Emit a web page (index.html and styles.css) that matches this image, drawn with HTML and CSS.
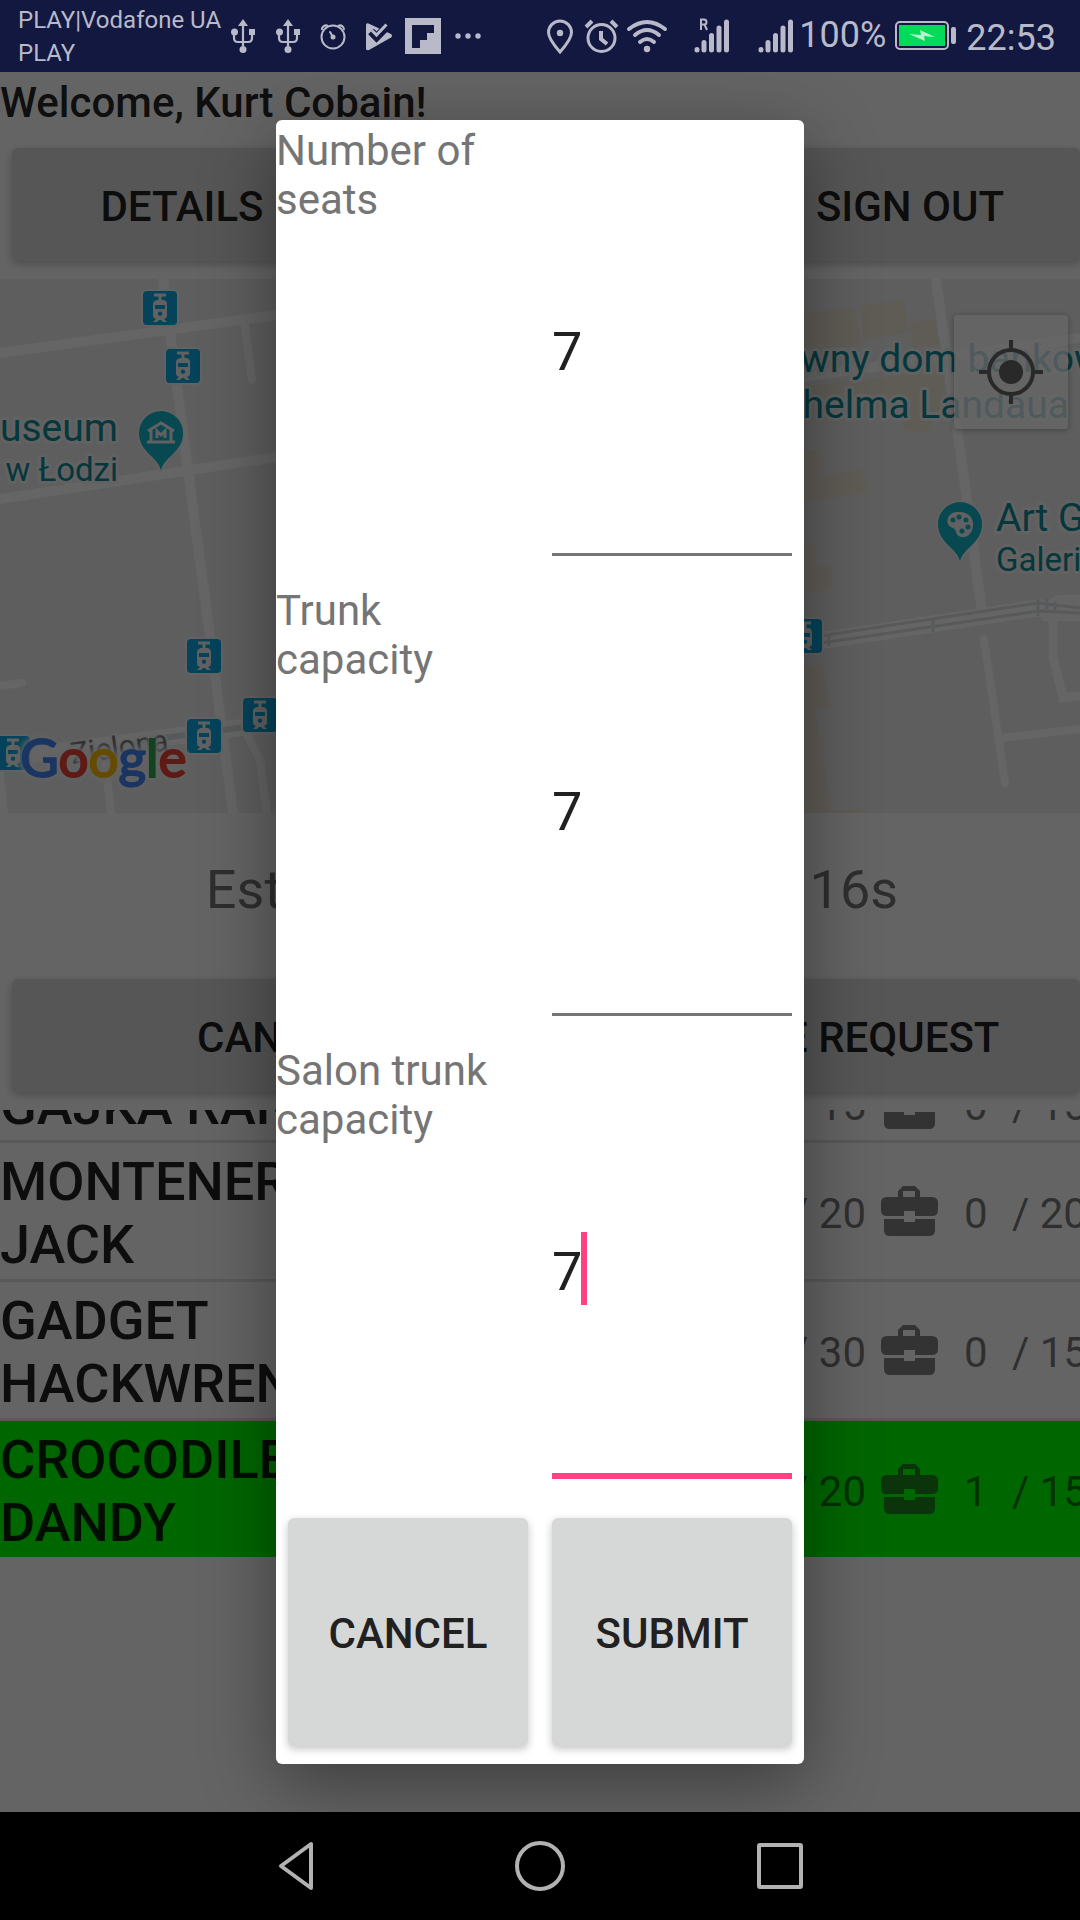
FILE: index.html
```html
<!DOCTYPE html>
<html lang="en">
<head>
<meta charset="utf-8">
<meta name="viewport" content="width=device-width, initial-scale=1">
<title>Trip request</title>
<link rel="stylesheet" href="styles.css">
</head>
<body>
<header class="status-bar">
  <div class="carrier">PLAY|Vodafone UA<br>PLAY</div>
  <div class="notifications">
    <svg class="icon" viewBox="0 0 36 36"><use href="#usb"/></svg>
    <svg class="icon" viewBox="0 0 36 36"><use href="#usb"/></svg>
    <svg class="icon" viewBox="0 0 36 36" fill="none" stroke="currentColor" stroke-width="2"><circle cx="18" cy="19" r="11.5"/><path d="M7 12a4 4 0 0 1 6-4M29 12a4 4 0 0 0-6-4"/><path d="M15 14l3 5" stroke-linecap="round"/><circle cx="18" cy="19" r="1.5" fill="currentColor"/></svg>
    <svg class="icon" viewBox="0 0 36 36"><path fill="currentColor" d="M6 7q0-2.500 2.500-1.500L31 16q2 2 0 3.500L9 32q-3 1-3-1.500z"/><path d="M11 13.500l5.500 5.500L28 7.500" fill="none" stroke="#131840" stroke-width="8"/><path d="M11 17l5.500 5.500L28 11" fill="none" stroke="#131840" stroke-width="1"/><path d="M12 12.500l4.500 4.500L26.500 6.500" fill="none" stroke="currentColor" stroke-width="3"/></svg>
    <svg class="icon" viewBox="0 0 36 36"><path fill="currentColor" fill-rule="evenodd" d="M0 0h36v36H0zM7 7v23h8v-8h7v-7h7V7z"/></svg>
    <svg class="icon" viewBox="0 0 36 36" fill="currentColor"><circle cx="8" cy="18" r="2.700"/><circle cx="18" cy="18" r="2.700"/><circle cx="28" cy="18" r="2.700"/></svg>
  </div>
  <div class="system">
    <svg class="icon" viewBox="0 0 36 36" fill="none" stroke="currentColor" stroke-width="3"><path d="M21 34C14 26 9.500 20 9.500 14.500a11.500 11.500 0 0 1 23 0C32.500 20 28 26 21 34z"/><circle cx="21" cy="15" r="3.200" fill="currentColor" stroke="none"/></svg>
    <svg class="icon" viewBox="0 0 36 36" fill="none" stroke="currentColor" stroke-width="3"><circle cx="18.500" cy="20" r="13.500"/><path d="M18 13v8l6 5" stroke-width="4"/><path d="M3 9l6-6M34 9l-6-6" stroke-width="4"/></svg>
    <svg class="icon icon-wide" viewBox="0 0 56 36" fill="none" stroke="currentColor" stroke-width="4" stroke-linecap="round"><path d="M2 11Q20-3 38 11M8 17q12-10 24 0M13 24q7-6 14 0"/><circle cx="20" cy="31" r="3.200" fill="currentColor" stroke="none"/></svg>
    <svg class="icon icon-wide" viewBox="0 0 56 36"><use href="#bars"/><path d="M10 12V1.500h3q2.500 0 2.500 2.500t-2.500 2.500h-3m3.500 0 2.500 5.500" fill="none" stroke="currentColor" stroke-width="2"/></svg>
    <svg class="icon" viewBox="0 0 36 36"><use href="#bars"/></svg>
    <span class="status-text">100%</span>
    <svg class="battery" viewBox="0 0 64 36"><rect x="2" y="4" width="52" height="27" rx="4" fill="none" stroke="currentColor" stroke-width="2"/><rect x="5" y="7" width="46" height="21" fill="#00dc5a"/><path d="M15 16l12 1-1-5 15 7-11-1 1 5z" fill="#b6f5cd"/><rect x="57" y="9" width="5" height="17" rx="2" fill="currentColor"/></svg>
    <span class="status-text status-time">22:53</span>
  </div>
</header>

<div class="app">
  <main class="screen">
    <h1 class="welcome">Welcome, Kurt Cobain!</h1>
    <div class="button-row">
      <button class="btn" type="button">DETAILS</button>
      <button class="btn" type="button">REFRESH</button>
      <button class="btn" type="button">SIGN OUT</button>
    </div>

    <section class="map" aria-label="Map">
      <svg class="map-canvas" viewBox="0 0 1080 534" preserveAspectRatio="xMinYMin slice">
        <defs>
          <g id="usb"><path d="M18 4v24M9 15v5q0 4 4 4h10q4 0 4-4v-5" fill="none" stroke="currentColor" stroke-width="2.200"/><path d="M13 8l5-7 5 7z" fill="currentColor"/><circle cx="18" cy="31.500" r="3.500" fill="currentColor"/><circle cx="9.500" cy="14" r="3.500" fill="currentColor"/><path d="M24 11h6v6h-6z" fill="currentColor"/></g>
          <g id="bars" stroke="currentColor" stroke-width="5" stroke-linecap="round"><path d="M6 31v0.500M13 24v7.500M20.500 17v14.500M28 9.500v22M35.500 3.500v28" transform="translate(0 .5)"/></g>
          <g id="tram">
            <rect x="-2" y="-2" width="38" height="38" rx="6" fill="#f4f4f4"/>
            <rect width="34" height="34" rx="4" fill="#0aa9e0"/>
            <path d="M11 4h12M17 4v6" stroke="#f2f2f2" stroke-width="3"/>
            <path fill="#f2f2f2" fill-rule="evenodd" d="M13 9h8q3 1 3 4v12q0 2-3 3l3 3h-4l-2-2h-2l-2 2h-4l3-3q-3-1-3-3V13q0-3 4-4zM12 14v4h10v-4zM17 20.500a2.200 2.200 0 1 0 .1 0z"/>
          </g>
          <path id="pin" d="M0 38C-2 24-22 20-22 0a22 22 0 0 1 44 0C22 20 2 24 0 38z"/>
        </defs>
        <g class="map-buildings">
          <path d="M760 40l94-12 8 38-102 10zM860 27l44-6 5 33-46 6zM910 44l25-4 4 25-26 4zM760 112l182-20 4 26-18 34h-23l-5-20-140 18zM760 171h59l3 25 41-5 5 23-108 14zM760 264h55v24l17-2 1 25-73 9zM760 388l63-2 7 42-15 3 17 103h-72zM832 532l30-3v5h-30z"/>
        </g>
        <g class="map-roads">
          <path d="M163 0L188 191 210 358 233 534M0 74L276 36M0 220L276 178M936 0L967 221 982 333M760 104L1080 59" stroke-width="10"/>
          <path d="M244 41l8 60M0 407l22-3M248 458l12 23 7 53M105 480l6 54M0 494l4 40M984 360l21 144M1000 459l80-9" stroke-width="8"/>
          <path d="M0 480L276 444M760 371L1038 329h42" stroke-width="17"/>
          <path d="M1053 335v43l10 41 20-3" stroke-width="9"/>
          <path d="M1036 329l22-12h30v24h-44z" stroke-width="2" fill="#fafafa"/>
        </g>
        <g class="map-rails"><path d="M140 462L276 444" stroke-width="6"/><path d="M760 366L1038 324l42 5M760 373L1038 332l42 2M829 355v12M933 339v14M1038 320v17M1047 320v10M1055 323v9"/></g>
        <use href="#tram" x="143" y="12"/><use href="#tram" x="166" y="70"/><use href="#tram" x="187" y="360"/><use href="#tram" x="187" y="440"/><use href="#tram" x="243" y="419"/><use href="#tram" x="-4" y="457"/><use href="#tram" x="788" y="340"/>
        <g transform="translate(161 154)"><use href="#pin" class="pin"/><path fill="none" stroke="#f2f2f2" stroke-width="3" d="M-13-2L0-10l13 8M-10-3V8M10-3V8M-14 9h28M-4 5v-7l4 4 4-4v7"/></g>
        <g transform="translate(960 245)"><use href="#pin" class="pin"/><path fill="#f2f2f2" d="M-2-12C8-13 14-6 13 2S7 14 1 13-3 5-7 4-14-1-12-6-6-12-2-12z"/><g fill="#12b5cb"><circle cx="-7" cy="-4" r="2.500"/><circle cx="-1" cy="-7" r="2.500"/><circle cx="6" cy="-4" r="2.500"/><circle cx="8" cy="3" r="2.500"/><circle cx="2" cy="7" r="2.500"/></g></g>
        <g class="map-label">
          <text x="118" y="162" text-anchor="end" font-size="39">Museum</text>
          <text x="118" y="202" text-anchor="end" font-size="33">Miasta w Łodzi</text>
          <text x="741" y="93" font-size="39">Główny dom bankowy</text>
          <text x="1069" y="139" text-anchor="end" font-size="39">Wilhelma Landaua</text>
          <text x="996" y="252" font-size="39">Art Gallery</text>
          <text x="996" y="292" font-size="33">Galeria Sztuki</text>
        </g>
        <text class="street" x="72" y="485" transform="rotate(-8 72 485)" font-size="30">Zielona</text>
        <text class="logo" x="20" y="498" font-size="53"><tspan fill="#4285f4" stroke="#4285f4">G</tspan><tspan fill="#ea4335" stroke="#ea4335">o</tspan><tspan fill="#fbbc05" stroke="#fbbc05">o</tspan><tspan fill="#4285f4" stroke="#4285f4">g</tspan><tspan fill="#34a853" stroke="#34a853">l</tspan><tspan fill="#ea4335" stroke="#ea4335">e</tspan></text>
      </svg>
      <button class="locate" type="button" aria-label="My location">
        <svg viewBox="0 0 64 64" fill="none" stroke="currentColor" stroke-width="4"><circle cx="32" cy="32" r="22"/><circle cx="32" cy="32" r="12" fill="currentColor" stroke="none"/><path d="M32 0v10M32 54v10M0 32h10M54 32h10"/></svg>
      </button>
    </section>

    <p class="estimate">Estimated trip time: 42m 16s</p>

    <div class="button-row button-row-pair">
      <button class="btn" type="button">CANCEL</button>
      <button class="btn" type="button">CREATE REQUEST</button>
    </div>

    <div class="list-viewport">
      <ul class="list">
        <li class="row"><span class="name">GAJKA RAN</span><span class="total">/ 15</span><svg class="case" viewBox="0 0 57 50"><use href="#case"/></svg><span class="count">0</span><span class="limit">/ 15</span></li>
        <li class="row"><span class="name">MONTENERO JACK</span><span class="total">/ 20</span><svg class="case" viewBox="0 0 57 50"><use href="#case"/></svg><span class="count">0</span><span class="limit">/ 20</span></li>
        <li class="row"><span class="name">GADGET HACKWRENCH</span><span class="total">/ 30</span><svg class="case" viewBox="0 0 57 50"><use href="#case"/></svg><span class="count">0</span><span class="limit">/ 15</span></li>
        <li class="row row-selected"><span class="name">CROCODILE DANDY</span><span class="total">/ 20</span><svg class="case" viewBox="0 0 57 50"><defs><path id="case" fill="currentColor" fill-rule="evenodd" d="M17 11V5l5-5h12l5 5v6h12q6 0 6 6v7q0 6-6 6H34v-5H23v5H6q-6 0-6-6v-7q0-6 6-6zM22 11h12V5H22zM3 33h20v3h11v-3h20v11q0 6-6 6H9q-6 0-6-6z"/></defs><use href="#case"/></svg><span class="count">1</span><span class="limit">/ 15</span></li>
      </ul>
    </div>
  </main>

  <div class="scrim">
    <form class="dialog" role="dialog" aria-label="Car details">
      <label class="field-label" for="seats">Number of seats</label>
      <div class="field"><input id="seats" type="text" inputmode="numeric" value="7"></div>
      <label class="field-label" for="trunk">Trunk capacity</label>
      <div class="field"><input id="trunk" type="text" inputmode="numeric" value="7"></div>
      <label class="field-label" for="salon">Salon trunk capacity</label>
      <div class="field field-active"><input id="salon" type="text" inputmode="numeric" value="7"><span class="caret"></span></div>
      <button class="btn dialog-btn" type="button">CANCEL</button>
      <button class="btn dialog-btn" type="button">SUBMIT</button>
    </form>
  </div>
</div>

<nav class="nav-bar">
  <button type="button" aria-label="Back"><svg viewBox="0 0 60 60"><path d="M41 8v44L11 30z"/></svg></button>
  <button type="button" aria-label="Home"><svg viewBox="0 0 60 60"><circle cx="30" cy="30" r="23"/></svg></button>
  <button type="button" aria-label="Recent apps"><svg viewBox="0 0 60 60"><rect x="9" y="9" width="42" height="42" rx="1"/></svg></button>
</nav>
</body>
</html>
```

FILE: styles.css
```css
* { box-sizing: border-box; }

body {
  margin: 0;
  min-height: 100vh;
  display: flex;
  flex-direction: column;
  overflow-x: hidden;
  font-family: Roboto, "Liberation Sans", sans-serif;
  background: #000;
}

button, input { font: inherit; }

/* System status bar */
.status-bar {
  display: flex;
  align-items: center;
  height: 72px;
  padding: 0 24px 0 18px;
  background: #131840;
  color: #b9bac9;
}
.carrier { width: 207px; padding-top: 2px; font-size: 24px; line-height: 33px; white-space: nowrap; }
.notifications { display: flex; gap: 9px; }
.system { display: flex; align-items: center; gap: 8px; margin-left: auto; }
.icon { display: block; width: 36px; height: 36px; overflow: visible; }
.icon-wide { width: 56px; }
.battery { display: block; width: 64px; height: 36px; }
.status-text { font-size: 36px; line-height: 40px; padding-bottom: 2px; }
.status-time { padding: 4px 0 0; }

/* Screen behind the dialog */
.app { position: relative; flex: 1; display: flex; }
.screen {
  flex: 1;
  min-width: 0;
  display: flex;
  flex-direction: column;
  overflow: hidden;
  background: #fafafa;
  color: rgba(0, 0, 0, .87);
}
.welcome { margin: 0; font-size: 42px; font-weight: 500; line-height: 62px; }
.btn {
  height: 113px;
  padding: 3px 0 0;
  border: 0;
  border-radius: 6px;
  background: #d6d7d7;
  color: rgba(0, 0, 0, .87);
  font-size: 42px;
  font-weight: 500;
  box-shadow: 0 3px 8px rgba(0, 0, 0, .24);
}
.button-row {
  display: grid;
  grid-template-columns: repeat(3, 1fr);
  gap: 24px;
  padding: 14px 0 18px 12px;
}
.button-row-pair { grid-template-columns: 529fr 505fr; gap: 34px; padding-top: 12px; }

/* Map */
.map { position: relative; height: 534px; background: #ebebeb; overflow: hidden; }
.map-canvas { display: block; width: 100%; height: 100%; }
.map-buildings { fill: #eee5d6; }
.map-roads { fill: none; stroke: #fcfcfc; stroke-linecap: round; }
.map-rails { fill: none; stroke: #dcdee1; stroke-width: 3; }
.pin { fill: #12b5cb; stroke: #f6f6f6; stroke-width: 3; paint-order: stroke; }
.map-label { fill: #118a96; stroke: #f4f4f4; stroke-width: 6; paint-order: stroke; stroke-linejoin: round; }
.street { fill: #747a82; stroke: #f4f4f4; stroke-width: 4; paint-order: stroke; }
.logo {
  font-family: Lato, sans-serif;
  stroke-width: 2;
  filter: drop-shadow(0 0 3px #f4f4f4) drop-shadow(0 0 3px #f4f4f4);
}
.locate {
  position: absolute;
  top: 36px;
  right: 12px;
  display: grid;
  place-items: center;
  width: 114px;
  height: 114px;
  padding: 0;
  border: 0;
  border-radius: 4px;
  background: rgba(255, 255, 255, .75);
  color: #666;
  box-shadow: 0 1px 6px rgba(0, 0, 0, .3);
}
.locate svg { width: 64px; height: 64px; }

.estimate {
  margin: 0;
  padding: 45px 0 46px 24px;
  font-size: 54px;
  line-height: 63px;
  text-align: center;
  white-space: nowrap;
  color: rgba(0, 0, 0, .54);
}

/* Passenger list, scrolled part of a row up */
.list-viewport { flex: 1; overflow: hidden; }
.list { margin: -43px 0 0; padding: 0; list-style: none; }
.row {
  display: grid;
  grid-template-columns: minmax(0, 1fr) 120px 57px 74px 68px;
  align-items: center;
  padding: 7px 0 3px;
  font-size: 42px;
  line-height: 49px;
  color: rgba(0, 0, 0, .54);
  white-space: nowrap;
}
.row + .row { border-top: 3px solid #dedede; }
.row-selected { background: #0f0; }
.name {
  max-width: 360px;
  font-size: 54px;
  font-weight: 500;
  line-height: 63px;
  white-space: normal;
  color: rgba(0, 0, 0, .87);
}
.total { padding-right: 15px; text-align: right; }
.case { display: block; width: 57px; height: 50px; margin-bottom: 4px; color: rgba(46, 46, 46, .6); }
.count { padding-left: 26px; }

/* Dialog */
.scrim {
  position: absolute;
  inset: 0;
  display: flex;
  justify-content: center;
  padding: 48px 24px;
  overflow: hidden;
  background: rgba(0, 0, 0, .6);
}
.dialog {
  display: grid;
  grid-template-columns: 1fr 1fr;
  grid-template-rows: repeat(3, 460fr) 264fr;
  width: 528px;
  border-radius: 6px;
  background: #fff;
  box-shadow: 0 20px 72px rgba(0, 0, 0, .4);
}
.field-label { padding-top: 6px; font-size: 42px; line-height: 49px; color: #757575; }
.field { position: relative; display: flex; padding: 0 12px 24px; }
.field input {
  width: 100%;
  padding: 30px 0 0;
  border: 0;
  border-bottom: 3px solid #757575;
  border-radius: 0;
  outline: 0;
  background: none;
  font-size: 54px;
  color: #212121;
}
.field-active { padding-bottom: 21px; }
.field-active input { border-bottom: 6px solid #ff4081; }
.caret { position: absolute; top: 192px; left: 41px; width: 6px; height: 73px; background: #ff4081; }
.dialog-btn { height: auto; margin: 18px 12px; color: #212121; }

/* Navigation bar */
.nav-bar {
  display: grid;
  grid-template-columns: repeat(3, 240px);
  justify-content: center;
  height: 108px;
  background: #000;
}
.nav-bar button { display: grid; place-items: center; padding: 0; border: 0; background: none; }
.nav-bar svg { width: 60px; height: 60px; fill: none; stroke: #b2b2b2; stroke-width: 4; stroke-linejoin: round; }
```
